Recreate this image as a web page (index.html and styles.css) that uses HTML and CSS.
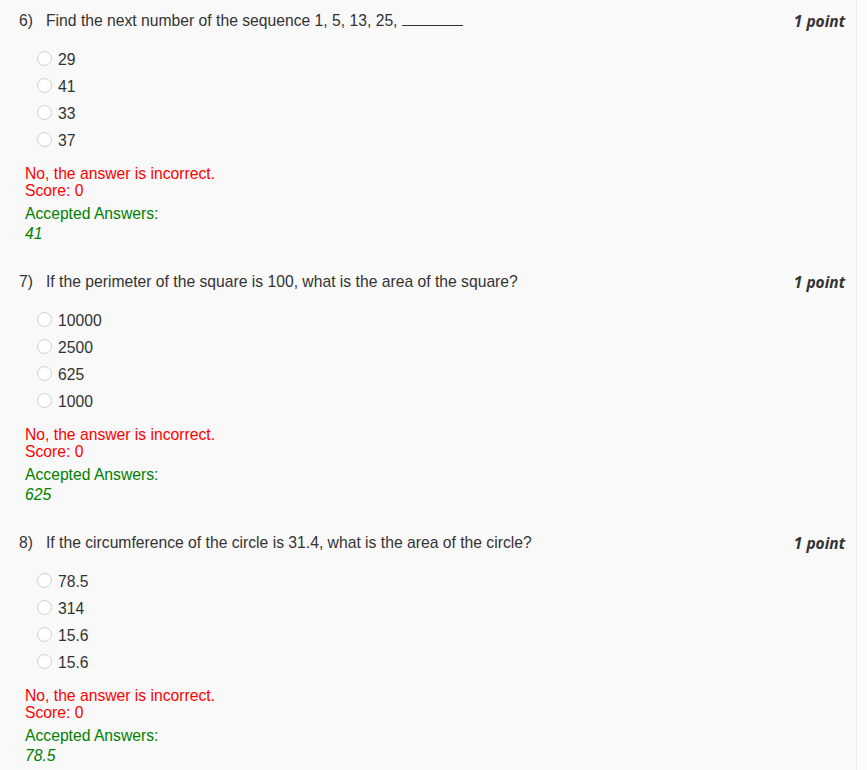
FILE: index.html
```html
<!DOCTYPE html>
<html>
<head>
<meta charset="utf-8">
<link rel="stylesheet" href="styles.css">
</head>
<body>
<div class="page">
  <div class="question">
    <div class="q-head">
      <span class="q-num">6)</span>
      <span class="q-text">Find the next number of the sequence 1, 5, 13, 25, <span class="blank"></span></span>
      <span class="q-point">1 point</span>
    </div>
    <ul class="options">
      <li><span class="radio"></span>29</li>
      <li><span class="radio"></span>41</li>
      <li><span class="radio"></span>33</li>
      <li><span class="radio"></span>37</li>
    </ul>
    <div class="feedback">
      <div class="wrong">No, the answer is incorrect.</div>
      <div class="wrong">Score: 0</div>
    </div>
    <div class="accepted">
      <div class="acc-label">Accepted Answers:</div>
      <div class="acc-value">41</div>
    </div>
  </div>

  <div class="question">
    <div class="q-head">
      <span class="q-num">7)</span>
      <span class="q-text">If the perimeter of the square is 100, what is the area of the square?</span>
      <span class="q-point">1 point</span>
    </div>
    <ul class="options">
      <li><span class="radio"></span>10000</li>
      <li><span class="radio"></span>2500</li>
      <li><span class="radio"></span>625</li>
      <li><span class="radio"></span>1000</li>
    </ul>
    <div class="feedback">
      <div class="wrong">No, the answer is incorrect.</div>
      <div class="wrong">Score: 0</div>
    </div>
    <div class="accepted">
      <div class="acc-label">Accepted Answers:</div>
      <div class="acc-value">625</div>
    </div>
  </div>

  <div class="question">
    <div class="q-head">
      <span class="q-num">8)</span>
      <span class="q-text">If the circumference of the circle is 31.4, what is the area of the circle?</span>
      <span class="q-point">1 point</span>
    </div>
    <ul class="options">
      <li><span class="radio"></span>78.5</li>
      <li><span class="radio"></span>314</li>
      <li><span class="radio"></span>15.6</li>
      <li><span class="radio"></span>15.6</li>
    </ul>
    <div class="feedback">
      <div class="wrong">No, the answer is incorrect.</div>
      <div class="wrong">Score: 0</div>
    </div>
    <div class="accepted">
      <div class="acc-label">Accepted Answers:</div>
      <div class="acc-value">78.5</div>
    </div>
  </div>
</div>
</body>
</html>
```
FILE: styles.css
```css
html, body {
  margin: 0;
  padding: 0;
  background: #fcfcfc;
}
body {
  font-family: "Liberation Sans", Arial, sans-serif;
  font-size: 15.7px;
  color: #333;
}
.page {
  width: 857px;
  min-height: 770px;
  background: #f9f9f9;
  border-right: 1px solid #ececec;
  padding-top: 11px;
  box-sizing: border-box;
}
.question {
  height: 261px;
  padding-left: 19px;
  padding-right: 11px;
  box-sizing: border-box;
}
.q-head {
  display: flex;
  align-items: center;
  height: 20px;
  line-height: 20px;
}
.q-num {
  width: 27px;
  flex: none;
}
.q-text {
  flex: 1;
}
.blank {
  display: inline-block;
  width: 61px;
  border-bottom: 1px solid #333;
  height: 14px;
  vertical-align: baseline;
}
.q-point {
  font-family: "Open Sans", sans-serif;
  font-weight: 700;
  font-style: italic;
  font-size: 15.5px;
  color: #333;
}
.options {
  list-style: none;
  margin: 15px 0 0 18px;
  padding: 0;
}
.options li {
  display: flex;
  align-items: center;
  height: 27px;
  line-height: 27px;
}
.radio {
  width: 13px;
  height: 13px;
  border: 1px solid #cfcfcf;
  border-radius: 50%;
  background: #fff;
  margin-right: 6px;
  position: relative;
  top: -1px;
  flex: none;
}
.feedback {
  margin: 11px 0 0 6px;
  line-height: 17px;
}
.wrong {
  color: #f00;
}
.accepted {
  margin: 5px 0 0 6px;
  line-height: 20px;
  color: #008000;
}
.acc-value {
  font-style: italic;
}
```
